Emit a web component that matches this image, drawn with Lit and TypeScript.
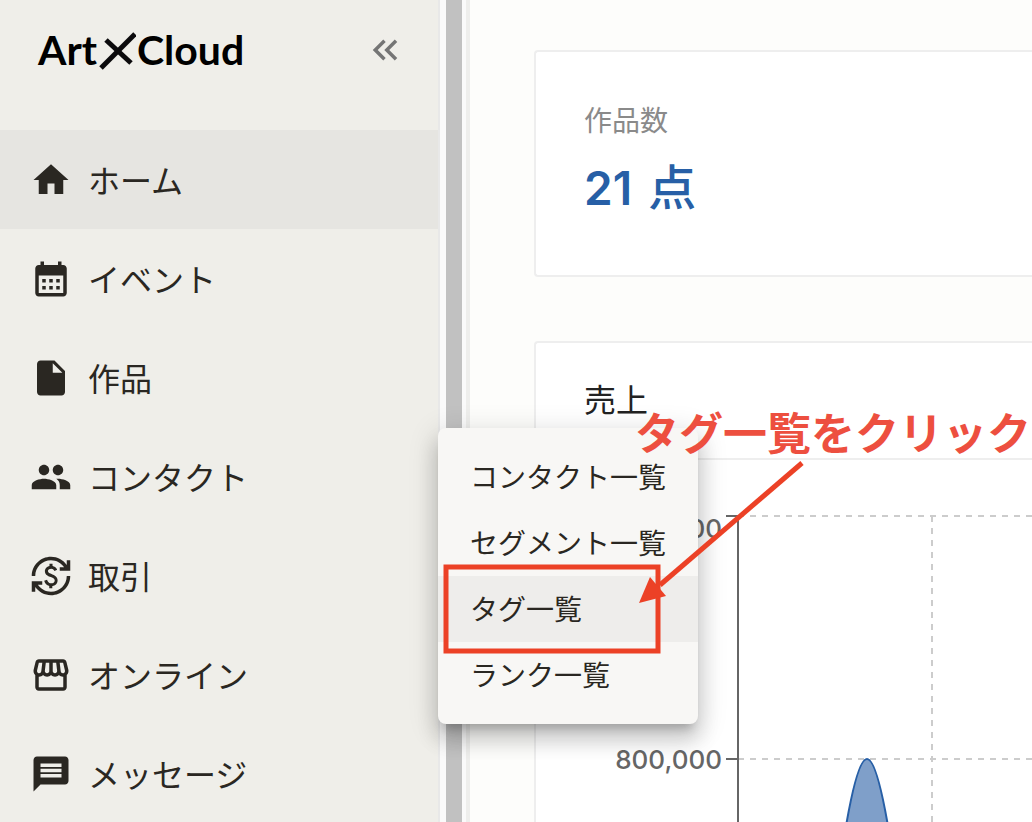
import { LitElement, html, css, svg } from "lit";
import { customElement, state } from "lit/decorators.js";
import { classMap } from "lit/directives/class-map.js";

interface NavItem {
  label: string;
  icon: string;
  active?: boolean;
  menu?: string[];
}

const NAV: NavItem[] = [
  { label: "ホーム", active: true, icon: "M10 20v-6h4v6h5v-8h3L12 3 2 12h3v8z" },
  {
    label: "イベント",
    icon: "M19 4h-1V2h-2v2H8V2H6v2H5c-1.11 0-1.99.9-1.99 2L3 20c0 1.1.89 2 2 2h14c1.1 0 2-.9 2-2V6c0-1.1-.9-2-2-2zm0 16H5V10h14v10zM9 14H7v-2h2v2zm4 0h-2v-2h2v2zm4 0h-2v-2h2v2zm-8 4H7v-2h2v2zm4 0h-2v-2h2v2zm4 0h-2v-2h2v2z",
  },
  {
    label: "作品",
    icon: "M14 2H6c-1.1 0-1.99.9-1.99 2L4 20c0 1.1.89 2 1.99 2H18c1.1 0 2-.9 2-2V8l-6-6zM13 9V3.5L18.5 9H13z",
  },
  {
    label: "コンタクト",
    icon: "M16 11c1.66 0 2.99-1.34 2.99-3S17.66 5 16 5c-1.66 0-3 1.34-3 3s1.34 3 3 3zm-8 0c1.66 0 2.99-1.34 2.99-3S9.66 5 8 5C6.34 5 5 6.34 5 8s1.34 3 3 3zm0 2c-2.33 0-7 1.17-7 3.5V19h14v-2.5c0-2.33-4.67-3.5-7-3.5zm8 0c-.29 0-.62.02-.97.05 1.16.84 1.97 1.97 1.97 3.45V19h6v-2.5c0-2.33-4.67-3.5-7-3.5z",
    menu: ["コンタクト一覧", "セグメント一覧", "タグ一覧", "ランク一覧"],
  },
  {
    label: "取引",
    icon: "M12.89 11.1c-1.78-.59-2.64-.96-2.64-1.9 0-1.02 1.11-1.39 1.81-1.39 1.31 0 1.79.99 1.9 1.34l1.58-.67c-.15-.44-.82-1.91-2.66-2.23V5h-1.75v1.26c-2.6.56-2.62 2.85-2.62 2.96 0 2.27 2.25 2.91 3.35 3.31 1.58.56 2.28 1.07 2.28 2.03 0 1.13-1.05 1.61-1.98 1.61-1.82 0-2.34-1.87-2.4-2.09l-1.66.67c.63 2.19 2.28 2.78 2.9 2.96V19h1.75v-1.24c.52-.09 3.02-.59 3.02-3.22.01-1.39-.6-2.61-3-3.44zM3 21H1v-6h6v2H4.52c1.61 2.41 4.36 4 7.48 4 4.97 0 9-4.03 9-9h2c0 6.08-4.92 11-11 11-3.72 0-7.01-1.85-9-4.67V21zM1 12C1 5.92 5.92 1 12 1c3.72 0 7.01 1.85 9 4.67V3h2v6h-6V7h2.48C17.87 4.59 15.12 3 12 3c-4.97 0-9 4.03-9 9H1z",
  },
  {
    label: "オンライン",
    icon: "M21.9 8.89l-1.05-4.37c-.22-.9-1-1.52-1.91-1.52H5.05c-.9 0-1.69.63-1.9 1.52L2.1 8.89c-.24 1.02-.02 2.06.62 2.88.08.11.19.19.28.29V19c0 1.1.9 2 2 2h14c1.1 0 2-.9 2-2v-6.94c.09-.09.2-.18.28-.28.64-.82.87-1.87.62-2.89zm-2.99-3.9l1.05 4.37c.1.42.01.84-.25 1.17-.14.18-.44.47-.94.47-.61 0-1.14-.49-1.21-1.14L16.98 5l1.93-.01zM13 5h1.96l.54 4.52c.05.39-.07.78-.33 1.07-.22.26-.54.41-.95.41-.67 0-1.22-.59-1.22-1.31V5zM8.49 9.52L9.04 5H11v4.69c0 .72-.55 1.31-1.29 1.31-.34 0-.65-.15-.89-.41-.25-.29-.37-.68-.33-1.07zm-4.45-.16L5.05 5h1.97l-.58 4.86c-.08.65-.6 1.14-1.21 1.14-.49 0-.8-.29-.93-.47-.27-.32-.36-.75-.26-1.17zM5 19v-6.03c.08.01.15.03.23.03.87 0 1.66-.36 2.24-.95.6.6 1.4.95 2.31.95.87 0 1.65-.36 2.23-.93.59.57 1.39.93 2.29.93.84 0 1.64-.35 2.24-.95.58.59 1.37.95 2.24.95.08 0 .15-.02.23-.03V19H5z",
  },
  {
    label: "メッセージ",
    icon: "M20 2H4c-1.1 0-1.99.9-1.99 2L2 22l4-4h14c1.1 0 2-.9 2-2V4c0-1.1-.9-2-2-2zm-2 12H6v-2h12v2zm0-3H6V9h12v2zm0-3H6V6h12v2z",
  },
];

const COLLAPSE =
  "M17.59 18 19 16.59 14.42 12 19 7.41 17.59 6l-6 6zM11 18l1.41-1.41L7.83 12l4.58-4.59L11 6l-6 6z";

const icon = (d: string) => html`
  <svg class="icon" viewBox="0 0 24 24" aria-hidden="true">${svg`<path d=${d} />`}</svg>
`;

@customElement("sales-chart")
class SalesChart extends LitElement {
  static styles = css`
    :host {
      display: block;
    }
    .plot {
      display: block;
      width: 100%;
      height: 800px;
    }
    .axis {
      stroke: #666;
      stroke-width: 2;
    }
    .grid {
      stroke: #ccc;
      stroke-width: 2;
      stroke-dasharray: 6 6;
    }
    .area {
      fill: #7f9fc9;
      stroke: #275fa6;
      stroke-width: 2;
    }
    .tick {
      fill: #666;
      font: 500 26px Inter, "Noto Sans CJK JP", sans-serif;
      text-anchor: end;
    }
  `;

  render() {
    return html`
      <svg class="plot" role="img" aria-label="売上">
        <line class="grid" x1="202" y1="56" x2="100%" y2="56" />
        <line class="grid" x1="202" y1="299" x2="100%" y2="299" />
        <line class="grid" x1="396" y1="56" x2="396" y2="100%" />
        <path class="area" d="M241 785C271 785 301 299 331 299S391 785 421 785" />
        <line class="axis" x1="202" y1="56" x2="202" y2="100%" />
        <line class="axis" x1="190" y1="56" x2="202" y2="56" />
        <line class="axis" x1="190" y1="299" x2="202" y2="299" />
        <text class="tick" x="186" y="78">1,200,000</text>
        <text class="tick" x="186" y="309">800,000</text>
      </svg>
    `;
  }
}

@customElement("app-root")
class AppRoot extends LitElement {
  static styles = css`
    :host {
      display: flex;
      height: 100vh;
      overflow: hidden;
      background: #fdfdfb;
      color: #2a2722;
      font-family: Inter, "Noto Sans CJK JP", sans-serif;
    }
    .sidebar {
      position: relative;
      z-index: 1;
      flex: 0 0 438px;
      background: #efeee9;
    }
    .brand {
      display: flex;
      align-items: center;
      justify-content: space-between;
      box-sizing: border-box;
      height: 130px;
      padding: 0 32px 30px 38px;
    }
    .logo {
      display: flex;
      align-items: center;
      gap: 1px;
      height: 44px;
      color: #000;
      font: 700 41px/44px Lato, sans-serif;
      text-decoration: none;
    }
    .cross {
      width: 38px;
      height: 44px;
      fill: none;
      stroke: #0b0a0c;
    }
    .collapse {
      display: flex;
      padding: 0;
      border: 0;
      background: none;
      color: #757575;
    }
    .icon {
      flex: none;
      width: 42px;
      height: 42px;
      fill: currentColor;
    }
    .list {
      margin: 0;
      padding: 0;
      list-style: none;
    }
    .entry {
      position: relative;
    }
    .link {
      display: flex;
      align-items: center;
      gap: 16px;
      height: 99px;
      padding: 0 30px;
      color: inherit;
      font-size: 32px;
      line-height: 48px;
      text-decoration: none;
    }
    .label {
      padding-top: 4px;
    }
    .active {
      background: #e6e5e1;
    }
    .menu {
      position: absolute;
      top: 1px;
      left: 100%;
      width: 260px;
      padding: 16px 0;
      border-radius: 8px;
      background: #f8f7f5;
      box-shadow: 0 10px 10px -6px rgba(0, 0, 0, 0.2), 0 16px 20px 2px rgba(0, 0, 0, 0.14),
        0 6px 28px 4px rgba(0, 0, 0, 0.12);
    }
    .option {
      display: block;
      padding: 2px 32px 0;
      color: inherit;
      font-size: 28px;
      line-height: 64px;
      text-decoration: none;
      white-space: nowrap;
    }
    .hover {
      background: #eeedeb;
    }
    /* Tutorial mark-up laid over the open menu */
    .guide {
      position: absolute;
      top: 0;
      left: 0;
      pointer-events: none;
    }
    .marks {
      display: block;
      width: 600px;
      height: 240px;
      overflow: visible;
      fill: none;
      stroke: #ec4126;
      stroke-width: 5;
    }
    .head {
      fill: #ec4126;
      stroke: none;
    }
    .hint {
      position: absolute;
      top: -26px;
      left: 197px;
      margin: 0;
      color: #ed4f3f;
      font-size: 44px;
      font-weight: 700;
      line-height: 64px;
      white-space: nowrap;
    }
    .track {
      box-sizing: border-box;
      flex: 0 0 32px;
      padding: 0 4px 0 6px;
      border: solid #e8e8e8;
      border-width: 0 4px 0 2px;
      border-right-color: #eeeeec;
      background: #fafafa;
    }
    .thumb {
      height: 100%;
      background: #c1c1c1;
    }
    .main {
      display: flex;
      flex: 1;
      flex-direction: column;
      gap: 64px;
      min-width: 0;
      padding: 50px 0 0 64px;
    }
    .card {
      flex: none;
      border: 2px solid #eee;
      border-right: 0;
      border-radius: 4px 0 0 4px;
      background: #fff;
    }
    .stat {
      padding: 48px;
    }
    .caption {
      margin: 0;
      color: #8a8a8a;
      font-size: 28px;
      font-weight: 400;
      line-height: 43px;
    }
    .value {
      display: flex;
      align-items: baseline;
      gap: 16px;
      height: 76px;
      margin: 8px 0 0;
      color: #275fa6;
      font-size: 46px;
      font-weight: 600;
      line-height: 74px;
    }
    .unit {
      font-size: 48px;
      font-weight: 500;
    }
    .title {
      margin: 0;
      padding: 32px 48px;
      border-bottom: 2px solid #eee;
      color: #222;
      font-size: 32px;
      font-weight: 400;
      line-height: 51px;
    }
  `;

  @state() private hovered = "タグ一覧";

  private renderMenu(items: string[]) {
    return html`
      <div class="menu">
        ${items.map(
          (label) => html`<a
            class=${classMap({ option: true, hover: label === this.hovered })}
            href="#"
            @mouseenter=${() => (this.hovered = label)}
            >${label}</a
          >`
        )}
        <div class="guide">
          <svg class="marks" aria-hidden="true">
            <rect x="8" y="139" width="212" height="84" />
            <path d="M364 35L222 157" />
            <path class="head" d="M201 175L212 149L228 168Z" />
          </svg>
          <p class="hint">タグ一覧をクリック</p>
        </div>
      </div>
    `;
  }

  render() {
    return html`
      <aside class="sidebar">
        <div class="brand">
          <a class="logo" href="#" aria-label="Art×Cloud">
            <span>Art</span>
            <svg class="cross" viewBox="0 0 38 44" aria-hidden="true">
              <path d="M3 40L37 6" stroke-width="5" />
              <path d="M8 12L33 35" stroke-width="5" />
            </svg>
            <span>Cloud</span>
          </a>
          <button class="collapse" aria-label="メニューを閉じる">${icon(COLLAPSE)}</button>
        </div>
        <nav>
          <ul class="list">
            ${NAV.map(
              (item) => html`<li class="entry">
                <a class=${classMap({ link: true, active: !!item.active })} href="#">
                  ${icon(item.icon)}<span class="label">${item.label}</span>
                </a>
                ${item.menu ? this.renderMenu(item.menu) : ""}
              </li>`
            )}
          </ul>
        </nav>
      </aside>
      <div class="track"><div class="thumb"></div></div>
      <main class="main">
        <section class="card stat">
          <h2 class="caption">作品数</h2>
          <p class="value"><span>21</span><span class="unit">点</span></p>
        </section>
        <section class="card">
          <h2 class="title">売上</h2>
          <sales-chart></sales-chart>
        </section>
      </main>
    `;
  }
}
